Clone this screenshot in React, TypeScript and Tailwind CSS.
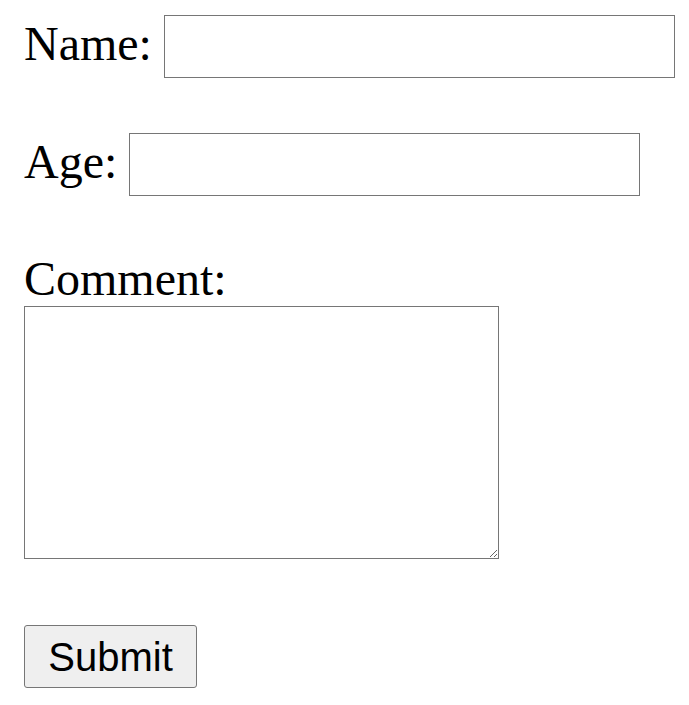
export default function App() {
  const serif = { fontFamily: '"Liberation Serif", "Times New Roman", serif' };
  return (
    <div className="min-h-[705px] w-[689px] bg-white pl-[24px] text-black" style={serif}>
      <div className="flex items-start pt-[15px]">
        <span className="mt-[5px] text-[48px] leading-[48px]">Name:</span>
        <input
          type="text"
          className="ml-[12px] h-[63px] w-[511px] border border-[#767676] bg-white px-[2px] text-[40px] outline-none"
          style={{ fontFamily: '"Liberation Sans", Arial, sans-serif' }}
        />
      </div>
      <div className="mt-[55px] flex items-start">
        <span className="mt-[5px] text-[48px] leading-[48px]">Age:</span>
        <input
          type="text"
          className="ml-[12px] h-[63px] w-[511px] border border-[#767676] bg-white px-[2px] text-[40px] outline-none"
          style={{ fontFamily: '"Liberation Sans", Arial, sans-serif' }}
        />
      </div>
      <div className="mt-[59px] text-[48px] leading-[48px]">Comment:</div>
      <textarea
        className="mt-[3px] block h-[253px] w-[475px] resize border border-[#767676] bg-white outline-none"
      />
      <button
        type="button"
        className="mt-[66px] block h-[63px] w-[173px] rounded-[3px] border border-[#767676] bg-[#efefef] text-center text-[40px] leading-[46px] text-black"
        style={{ fontFamily: '"Liberation Sans", Arial, sans-serif' }}
      >
        Submit
      </button>
    </div>
  );
}
